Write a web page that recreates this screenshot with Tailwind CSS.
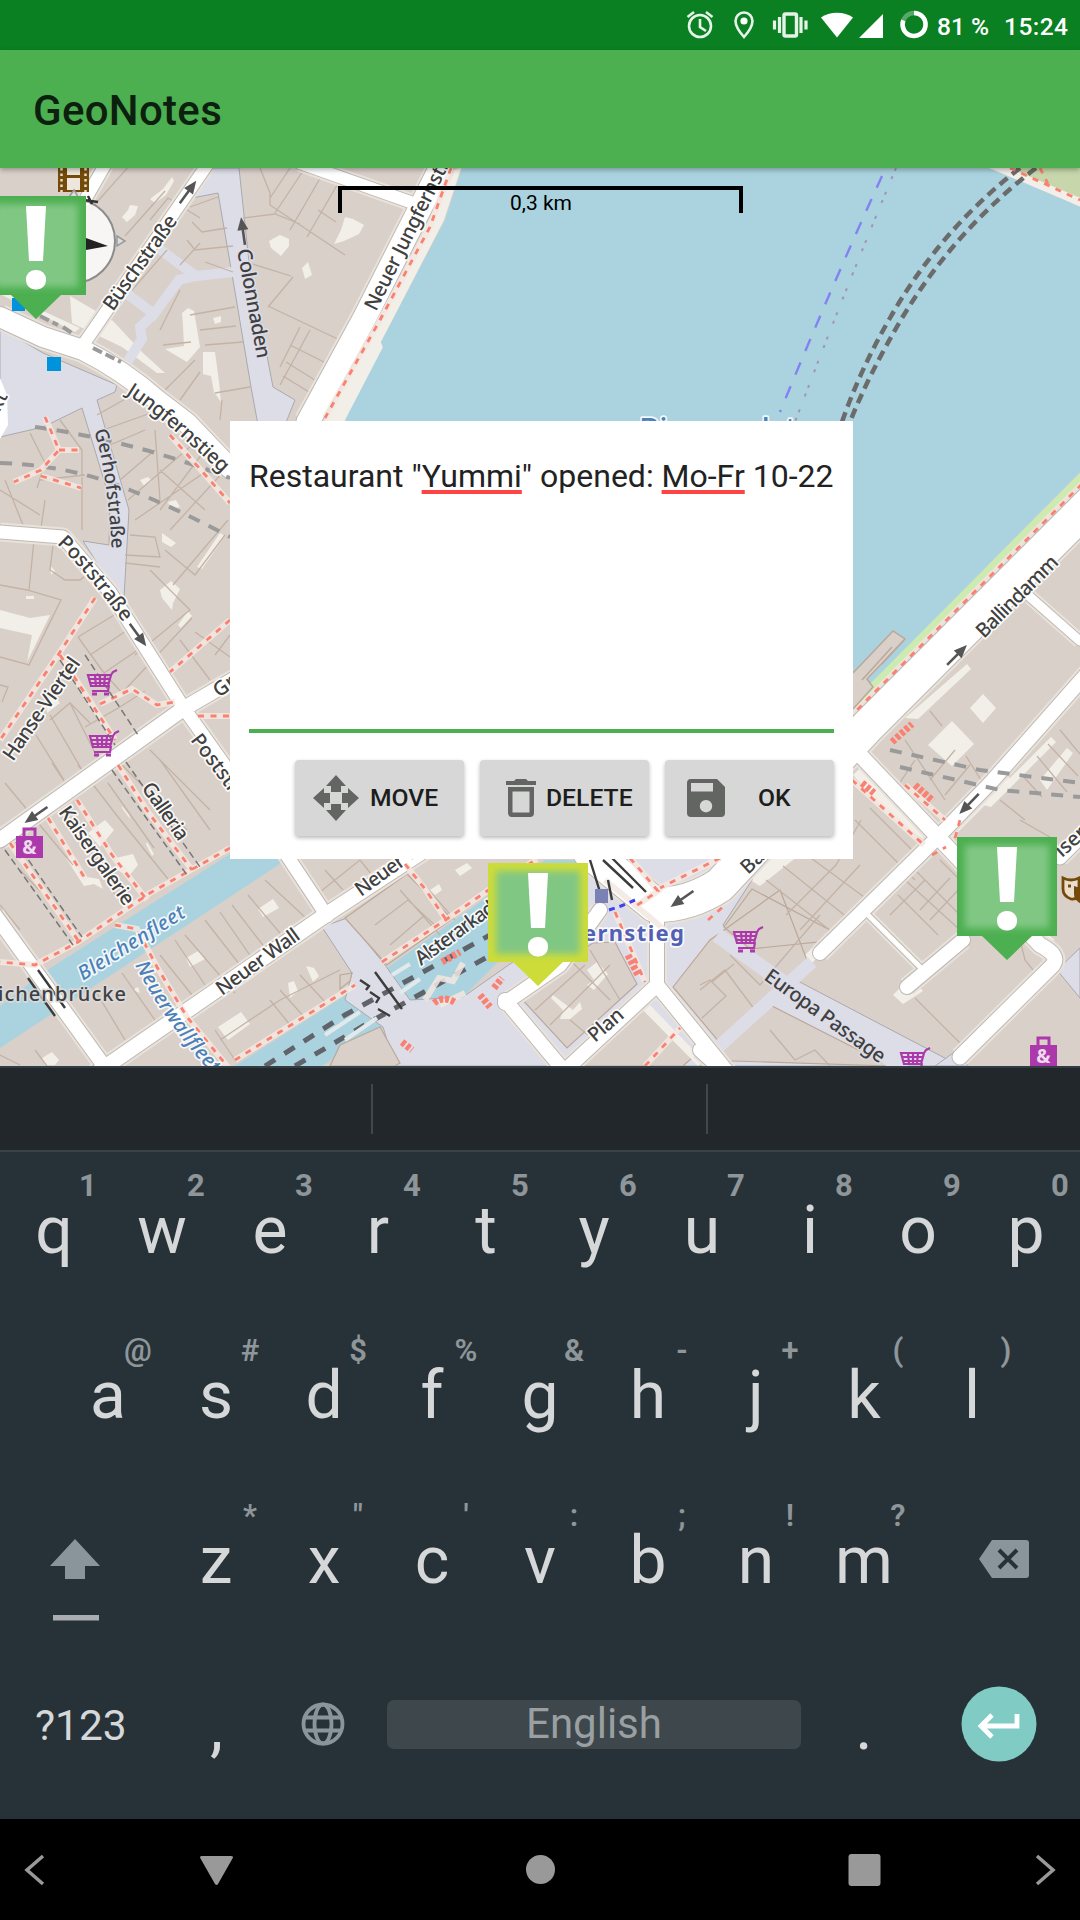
<!DOCTYPE html>
<html lang="en">
<head>
<meta charset="utf-8">
<title>GeoNotes</title>
<script src="https://cdn.jsdelivr.net/npm/@tailwindcss/browser@4"></script>
</head>
<body class="w-[1080px] h-[1920px] overflow-hidden flex flex-col bg-black font-['Roboto',sans-serif]">

<!-- status bar -->
<header class="h-[50px] shrink-0 bg-[#0a8022] relative z-10">
  <svg class="block w-[1080px] h-[50px]" viewBox="0 0 1080 50" fill="none" stroke="#fff">
    <g stroke-width="2.6" stroke="#e6f3e8"><circle cx="700" cy="26" r="11"/><path d="M700 19v8l6 4M687.500 17l6.500-5M712.500 17l-6.500-5" /></g>
    <path d="M744 12.500c-5 0-8.500 4-8.500 8.500 0 6.500 8.500 16 8.500 16s8.500-9.500 8.500-16c0-4.500-3.500-8.500-8.500-8.500z" stroke-width="2.600" stroke="#e6f3e8"/><circle cx="744" cy="21" r="3.600" fill="#fff" stroke="none"/>
    <g stroke="#e6f3e8"><rect x="784" y="14" width="12.500" height="22" rx="1.500" stroke-width="3.400"/><path stroke-width="3.200" d="M779.500 17v16M774.500 20.500v9M801 17v16M806 20.500v9"/></g>
    <path d="M837 37.500L821 17.500c8-6.500 24-6.500 32 0z" fill="#fff" stroke="none"/>
    <path d="M859 38L883 14v24z" fill="#fff" stroke="none"/>
    <circle cx="914" cy="24.500" r="11.500" stroke-width="4.500" stroke="#58a968"/>
    <path d="M914 13a11.500 11.500 0 1 1-10.700 7.400" stroke-width="4.500"/>
    <g fill="#fff" stroke="none" font-family="Roboto" font-weight="500" font-size="24.500">
      <text x="937" y="35" textLength="52">81 %</text><text x="1004" y="35" textLength="64">15:24</text>
    </g>
  </svg>
</header>

<!-- app bar -->
<div class="h-[118px] shrink-0 bg-[#4caf50] flex items-center pl-[33px] pt-[3px] relative z-10 shadow-[0_2px_5px_rgba(0,0,0,0.3)]">
  <h1 class="text-[42px] leading-none font-medium text-[#0d1f0e] tracking-[0.3px]">GeoNotes</h1>
</div>

<!-- map -->
<main class="relative h-[898px] shrink-0 overflow-hidden bg-[#d9d0c9]">
<svg id="map" class="absolute inset-0 w-[1080px] h-[898px]" viewBox="0 168 1080 898" fill="none">
  <defs>
    <g id="cart" stroke="#ac39ac" stroke-width="2.200" fill="none"><path d="M1 6h23l-3 11H4zM2 10h21M3 14h19M8 6l1 11M13 6v11M18 6l-1 11M24 6l2-3 4-2M22 16l-1 6H5" /><path d="M5 25h5M17 25h5" stroke-width="3"/></g>
    <g id="bag"><path d="M8 10V2h11v8" stroke="#ac39ac" stroke-width="3" fill="none"/><path d="M0 9h27v22H0z" fill="#ac39ac"/><text x="13.500" y="27" font-family="Noto Sans" font-size="19" font-weight="700" fill="#eddaec" text-anchor="middle">&amp;</text></g>
    <g id="arrow"><path d="M-14 0H4" stroke="#555" stroke-width="2.600"/><path d="M14 0L1-5.500V5.500z" fill="#555"/></g>
    <filter id="soft" x="-20%" y="-20%" width="140%" height="140%"><feGaussianBlur stdDeviation="3.500"/></filter>
    <g id="bang" fill="#fff"><path d="M-10 10H10L7 65H-7z"/><rect x="-10" y="74" width="20" height="19.500" rx="9"/></g>
  </defs>

  <!-- courtyards -->
  <g fill="#f2efe9">
    <path d="M172 177l-9 12-13 10 5 4 11-8 8-14zM138 206l-8-1-2 5-6 7 5 5 8-7zM289 239l-9-4-11 6 2 7 10 8 8-10zM182 313l6-5 6 3 6 36-13 15-22-13 19-3-1-20zM203 352h12l4 30 2 20-7-10-3-16-8-2zM302 268l6-6 4 13-7 4zM213 318l8-2v6l-6 2zM345 217l8 2 11 6-5 9-15 7-10 3 7-14zM168 502l8-2 4 7-9 2zM140 480l8-3 4 4-8 5zM197 567l23-34 5 3-23 33zM160 590l11-9 9 8-7 14-1 7-10-12zM178 625l10-14 4 5-11 12zM162 533l14 10-5 4-9-5zM0 610l30 8 20-3-23 47 5-27-32-7zM47 713l13-10-6-8-8 8zM26 596h8v3h-8zM50 565l5 6-4 4z"/>
    <path d="M88 833l17-13 9 10-14 17zM116 858l17-4 5 11-10 12-10-7zM66 858l8-2 7 20 18 3 4 10-9-5-10 2zM122 806l7 9 1 4-8-11zM147 842l7 12-2 2-6-12zM258 909l15-10 6 9-16 9zM186 958l12-7 7 8-15 8zM218 1027l23-15 9 12-22 16zM288 983l6-2 4 10-8 7zM306 966l8 2 5 8-6 6zM42 1058l10-6 7 8-4 5h-10zM133 990l5-3 2 6zM455 870l12-7 5 5-12 8zM430 890l9-6 3 6-7 5zM399 910l9-8 8 7-14 7zM370 923l9-5 6 9-9 5z"/>
    <path d="M970 708l13-14 13 14-13 15zM928 745l24-24 22 23-22 22zM905 718l62-54 4 5-53 50zM1040 780l27-32 6 5-26 37zM983 805l68-68 5 5-65 65z"/>
    <path d="M750 880l36-36 12 12-38 30zM803 957l100-98 6 6-99 100zM700 1040l62-44 4 4-60 55zM980 780l14-14 17 13-68 68-12-10zM893 995l18-18 12 14-20 13zM1035 925l20 15-20 6z"/>
    <path d="M853 775l20-20 40 45 20 30-6 12-40-28z"/>
    <path d="M70 296l43 25 30 32 22 20-8 0-35-26-50-24zM0 285l30 20 50 23-5 4-75-38zM325 385l95-200 16-10 25-7-17 52-63 122 2 6-37 73-32 9z"/>
  </g>

  <!-- water -->
  <g fill="#aad3df">
    <path d="M462 168L445 220 381 342 383 347 345 420 500 740 853 705 993 560 1080 472V207L997 168z"/>
    <path d="M0 1006L44 972 230 854H295L0 1048z"/>
    <path d="M235 1066L380 973 487 897 545 860H600L463 997 405 1005 383 1027 322 1066z"/>
  </g>
  <path d="M1080 168H1000l80 34z" fill="#c8d7ab"/>
  <path d="M990 164l92 39" stroke="#f4eee8" stroke-width="8"/>
  <path d="M1082 476L850 709" stroke="#cdebb0" stroke-width="7"/>
  <path d="M1082 484L850 717" stroke="#f1e3dc" stroke-width="6"/>
  <path d="M853 673l40-42 12 8-38 40 6 8-20 22" fill="#d9d0c9" stroke="#bba899" stroke-width="1.500"/>
  <path d="M862 680l30-33M882 664l22-24" stroke="#bba899" stroke-width="1.500"/>

  <!-- pedestrian areas -->
  <g fill="#dddde8" stroke="#aaa9ae" stroke-width="1">
    <path d="M213 168H239L249 262 273 387 295 400 285 425H258L251 387 233 280 218 193 192 198z"/>
    <path d="M0 328L43 353 117 385 115 392 97 400 129 510 127 545 124 598 113 588 83 541 109 545 110 500 82 408 43 427 0 437z"/>
    <path d="M322 927L347 918 385 965 410 1000 463 997 530 950 600 858H760L752 880 723 925 730 935 735 948 960 1066H395L383 1027 345 1000 352 973z"/>
    <path d="M1057 970l23-22v50zM935 1066l25-18 8 18z"/>
  </g>
  <path d="M0 378l7 17 1 30-8 14z" fill="#fff"/>
  <path d="M158 248l38 28 37-4M196 276l-17 4-25 34-28-21M154 314l-14 13 2 12-14 22" stroke="#dddde8" stroke-width="10"/>

  <!-- buildings on open ground -->
  <g fill="#d9d0c9" stroke="#bba899" stroke-width="1.200">
    <path d="M345 918l62-44 45 45-65 46zM520 997l40-34 33-20 22-1 22 42-70 64z"/>
    <path d="M580 1066l67-63 45 55-9 8zM673 987l37-47 70-50 30 78-90 75zM724 927l28-38 95 50-97 10zM700 1060l70-55 120 61zM340 1045l40-18 20 36-5 3H330zM340 975l12-2-2 8-10 8z"/>
  </g>
  <path d="M587 970l10-8 11 12-14 16-7-5 7-5zM553 995l20 15 7-8 2 7-12 10-10 0 3-9-12-12zM505 1003l8-5 46 58-6 10zM640 1007l8-4 55 57-5 6z" fill="#f2efe9"/>

  <!-- plot boundaries -->
  <g stroke="#c3b3a6" stroke-width="1.300">
    <path d="M90 210l55-62M125 236l40-45M150 220l18-22 32 20M190 207l28-10M192 222l10 10 25-4M187 240l8 10 38-4M205 262l28 10M180 265l20-22M260 168l10 25 0 12 75 50M290 168l-20 30M305 168l-30 45M322 175l-32 55M340 180l-33 57M318 210l18 12M243 218l32-4 25 10M246 262l45 14M268 306l76 36M293 277l-25 30M310 330l-30 55M290 345l40 20M286 362l32 20M283 376l26 16M300 327l-20 40M190 315l45-8M200 330l36-4M205 345l38-3M215 393l35-6M222 400l-2 20M163 345l28-3M165 390l30-30M180 400l20-28M132 290l35-40M160 330l20-40"/>
    <path d="M30 433l15 30-8 25M60 420l22 30v80M40 480l45-5M45 500l-5 35M5 480l20 50M0 490l40 25M97 415l30-17M103 430l48-17M110 445l35-15M120 480l35-30M128 500l70-60M135 520l95-65M155 430l5 70M160 470l45 40M205 450l-45 60M225 470l-55 60M228 520l-55 65M165 550l30 25 30-40M150 570l40 40-55 45M130 535l25 2 5 20-35-2M125 563l35 4M0 585l27 5 34 10-15 30M34 540l-5 50M53 545l-3 25 15 10 15 0 15-12M61 600l-32 65-29-8M78 637l46-28M78 637l26 36 18 20 70-75M90 655l48-32M104 673l44-30M85 727l35-20 25-16M0 685l8 2-6 15M50 720l20-17 20 20M50 715l32 55M70 703l30 60M36 735l28 45M180 640l30 40M195 632l35 25M215 655l15-20"/>
    <path d="M5 783l68 82M52 763l12 18M78 765l40 52 50 62M108 783l46 65M122 765l65 65M160 760l50 70M150 750l60 60M20 870l48 50M90 850l25 45M0 905l20 25M68 1007l32 54M95 990l30 50M122 973l35 50M160 955l40 50M175 940l40 60M185 935l50 58M205 920l45 58M220 912l38 55M232 905l40 52M248 895l42 50M265 880l43 40M325 870l18 20M310 900l50-40M0 1055l20 10M35 1050l12 16M220 1040l60-40 60-30M235 1060l-20-30M270 1000l20 25M280 990l25 28M300 975l28 30"/>
    <path d="M360 860l20 25M375 925l33-25 30 28M390 945l35-30M400 890l40 45M420 880l35 40M535 1010l50-45M550 1025l60-60M590 950l30 50M570 960l40 40M600 1045l-30-25M700 990l25-20 30 40M712 982l22-18"/>
    <path d="M766 880l70 55M783 866l70 56M800 850l75 55M786 915l50-50 25-45M800 930l60-65M730 955l30 30 60-70M855 820l60 60M870 808l50 50M905 880l55 50M915 870l50 50M898 895l40 40M940 860l25 25M930 920l30-32M920 910l30-32M890 915l35-35M915 998l45 45M1020 820l35 20M1000 800l25 20M1020 940l5 20 12 15-8 6M700 985l10-5 16 16-24 22M770 1030l25 30M795 1060l20-10 15 16M930 711l12 15M966 756l20 32M905 740l40 60M915 760l-20 30M1060 730l25 30M1048 744l30 32M1037 756l30 36M1022 775l20 22M930 780l25-30M945 795l25-30"/>
  </g>

  <g id="roads"></g>

  <!-- railway in tunnel, ferry line -->
  <g stroke="#6b6b6b" stroke-width="4.500" stroke-dasharray="10 6">
    <path d="M1020 168Q940 230 890 318 860 370 842 422"/>
    <path d="M1036 168Q955 230 902 318 868 376 850 422"/>
  </g>
  <path d="M882 176Q830 290 780 412" stroke="#8282f2" stroke-width="2.400" stroke-dasharray="13 12.500"/>
  <path d="M896 168Q845 290 795 422" stroke="#a294b3" stroke-width="2" stroke-dasharray="3 6 3 14"/>
  <g stroke="#9a9a9a" stroke-width="4" stroke-dasharray="12 10">
    <path d="M35 427Q130 440 230 478M0 463Q70 465 130 490 180 510 230 537"/>
    <path d="M890 750L980 770 1080 783M900 767L1000 790 1080 797"/>
  </g>
  <g stroke="#60646a" stroke-width="5" stroke-dasharray="12 11">
    <path d="M265 1066L345 1015 490 935M295 1066L370 1022 500 950"/>
  </g>
  <path d="M325 1035l35-23M345 1040l32-22M392 975l18-11M400 993l20-14" stroke="#e2e9ea" stroke-width="4"/>

  <!-- footpaths -->
  <g stroke="#f3e7e1" stroke-opacity="0.850" stroke-width="6">
    <path d="M451 168L430 227 380 320 325 418M95 598L58 655 0 740M60 655L115 740M118 765L148 812 192 870M230 848L150 893 78 942 35 965 0 962M77 800l35 55 35 45M48 818l38 62M10 843l35 50 35 50M115 925l22 4 20 38 30 50 45 55M235 1060L355 985M382 962l65-43 40-28 50-32M405 864l20 25 22 32M230 620l-60 52M100 704l32-15 25 16 18-3M198 716h32M170 435l60 68M45 417l14 33-18 20-27 12M59 450h20M41 476l40 12"/>
    <path d="M852 780l72 65M905 785l40 35M630 858l28 33-22 15M720 858l-60 30M615 912l30 70M605 880l60 50M645 1066l35-38M425 1000l14-22 14 3 10-18M440 1005l25-12"/>
  </g>
  <g stroke="#fa8072" stroke-width="2.800" stroke-dasharray="6 6.500">
    <path d="M1082 484L850 717M451 168L430 227 380 320 325 418M95 598L58 655 0 740M60 655L115 740M118 765L148 812 192 870M230 848L150 893 78 942 35 965 0 962M77 800l35 55 35 45M48 818l38 62M10 843l35 50 35 50M115 925l22 4 20 38 30 50 45 55M235 1060L355 985M382 962l65-43 40-28 50-32M405 864l20 25 22 32M230 620l-60 52M100 704l32-15 25 16 18-3M198 716h32M170 435l60 68M45 417l14 33-18 20-27 12M59 450h20M41 476l40 12"/>
    <path d="M852 780l72 65M905 785l40 35M630 858l28 33-22 15M720 858l-60 30M615 912l30 70M645 1066l35-38M1010 168l70 32M1040 168l8 16M708 920l16-14M932 855l14-8M955 838l5-18"/>
  </g>
  <g stroke="#fa8072" stroke-width="7" stroke-dasharray="4 2">
    <path d="M442 962l18-10M434 1003q10-8 22 0M480 995l10 12M494 988l8-10M402 1042l10 8M862 783l12 10M915 785l18 16M892 742l20-18M628 955l10 20"/>
  </g>
  <g stroke="#777" stroke-width="1.500" stroke-dasharray="7 4">
    <path d="M85 655l53 80M60 660l55 85M112 770l75 105M126 762l74 105M5 850l68 95M16 842l66 95"/>
  </g>
  <path d="M40 316l18 9M63 327l9 6M93 348l28 14" stroke="#9a9a9a" stroke-width="4" stroke-dasharray="10 4"/>
  <g stroke="#3c3c3c" stroke-width="2.400">
    <path d="M28 978l27 38M38 970l27 38M375 972l27 37M590 860l10 32M608 880l4 20M603 860l30 28M612 858l34 34M360 980l9 6-3 4M370 992l9 6-3 5M378 1009l12 7"/>
  </g>
  <path d="M609 910l12-4 14-6" stroke="#4040ee" stroke-width="3" stroke-dasharray="6 5"/>

  <!-- labels -->
  <defs>
    <path id="pJung" d="M126 394Q160 415 231 482"/>
    <path id="pGer" d="M94 431Q108 470 113 570"/>
    <path id="pPost" d="M57 544Q85 570 126 626"/>
    <path id="pNeuf" d="M135 965Q165 1025 222 1085"/>
  </defs>
  <g font-family="'Noto Sans','Open Sans',sans-serif" font-size="20" font-weight="500" fill="#404040" stroke="#fff" stroke-opacity="0.850" stroke-width="3.500" stroke-linejoin="round" paint-order="stroke">
    <text transform="translate(113 312) rotate(-54.500)" textLength="112">Büschstraße</text>
    <text transform="translate(237 250) rotate(79.500)" stroke="#dddde8" textLength="111">Colonnaden</text>
    <text transform="translate(376 312) rotate(-63.500)" textLength="186">Neuer Jungfernstieg</text>
    <text textLength="125"><textPath href="#pJung">Jungfernstieg</textPath></text>
    <text stroke="#dddde8" font-size="18.700"><textPath href="#pGer">Gerhofstraße</textPath></text>
    <text><textPath href="#pPost">Poststraße</textPath></text>
    <text transform="translate(190 740) rotate(53)">Poststraße</text>
    <text transform="translate(13 762) rotate(-55.500)" textLength="120">Hanse-Viertel</text>
    <text transform="translate(219 698) rotate(-36)">Große Bleichen</text>
    <text transform="translate(141 788) rotate(55)" textLength="66">Galleria</text>
    <text transform="translate(58 812) rotate(55)" textLength="116">Kaisergalerie</text>
    <text transform="translate(222 996) rotate(-36)" textLength="98">Neuer Wall</text>
    <text transform="translate(361 897) rotate(-36)" textLength="98">Neuer Wall</text>
    <text transform="translate(421 966) rotate(-36)" textLength="115">Alsterarkaden</text>
    <text transform="translate(595 1043) rotate(-41)" textLength="40">Plan</text>
    <text transform="translate(748 875) rotate(-43)">Ballindamm</text>
    <text transform="translate(984 639) rotate(-45)" textLength="107">Ballindamm</text>
    <text transform="translate(1062 858) rotate(-42)">iserstraße</text>
    <text transform="translate(763 979) rotate(36)" stroke="#dddde8" textLength="144">Europa Passage</text>
    <text x="-2" y="1001" stroke="#dcdcdc" textLength="128">ichenbrücke</text>
    <text transform="translate(8 396) rotate(-62)" text-anchor="end">Markt</text>
    <g font-style="italic" fill="#4c80b8">
      <text transform="translate(83 981) rotate(-32)" textLength="122">Bleichenfleet</text>
      <text textLength="134"><textPath href="#pNeuf">Neuerwallfleet</textPath></text>
    </g>
    <text x="639" y="440" font-size="31" fill="#4c80b8">Binnenalster</text>
    <text x="583" y="941" font-size="22" font-weight="700" fill="#5160b5" textLength="101">ernstieg</text>
  </g>
  <use href="#arrow" transform="translate(188 192) rotate(-54)"/>
  <use href="#arrow" transform="translate(243 231) rotate(-98)"/>
  <use href="#arrow" transform="translate(138 635) rotate(54)"/>
  <use href="#arrow" transform="translate(36 815) rotate(145)"/>
  <use href="#arrow" transform="translate(957 655) rotate(-45)"/>
  <use href="#arrow" transform="translate(969 804) rotate(134)"/>
  <use href="#arrow" transform="translate(682 899) rotate(145)"/>

  <!-- points of interest -->
  <path d="M47 357h14v14H47zM12 298h13v13H12z" fill="#0092da"/>
  <rect x="595" y="889" width="13" height="14" fill="#7a82b5"/>
  <path d="M58 160h31v32H58z" fill="#734a08"/><path d="M67 160h13v15H67zM67 178h13v12H67z" fill="#eee6dc"/><path d="M61.500 168v24M85.500 168v24" stroke="#e8dccb" stroke-width="2.500" stroke-dasharray="2.500 3"/>
  <use href="#cart" x="87" y="669"/><use href="#cart" x="89" y="730"/><use href="#cart" x="733" y="926"/><use href="#cart" x="900" y="1047"/>
  <use href="#bag" x="16" y="827"/><use href="#bag" x="1030" y="1036"/>
  <path d="M1063 878q8 4 16 0v18q-4 4-8 3-8-3-8-10z" stroke="#734a08" stroke-width="2.800" fill="#eadfce"/><path d="M1074 886q6 3 12-2v22q-12-4-12-12z" fill="#734a08"/><path d="M1068 886h3" stroke="#734a08" stroke-width="3"/>

  <!-- compass -->
  <circle cx="73" cy="241" r="42" fill="#fff" fill-opacity="0.800" stroke="#8c8c8c" stroke-width="2"/>
  <path d="M86 238L108 246 86 250z" fill="#222"/><path d="M117 236l8 5-8 5zM69 197l5-7 4 7z" fill="#ddd" stroke="#999" stroke-width="1.500"/>
  <path d="M84 200l14 2M88 196l4 8" stroke="#333" stroke-width="2.500"/>

  <!-- note markers -->
  <g transform="translate(36 196)"><path d="M-50 0H50V99H25L0 123-25 99H-50z" fill="#4caf50"/><rect x="-42" y="8" width="84" height="83" fill="#81c784" filter="url(#soft)"/><use href="#bang"/></g>
  <g transform="translate(538 863)"><path d="M-50 0H50V99H25L0 123-25 99H-50z" fill="#cddc39"/><rect x="-42" y="8" width="84" height="83" fill="#81c784" filter="url(#soft)"/><use href="#bang"/></g>
  <g transform="translate(1007 837)"><path d="M-50 0H50V99H25L0 123-25 99H-50z" fill="#4caf50"/><rect x="-42" y="8" width="84" height="83" fill="#81c784" filter="url(#soft)"/><use href="#bang"/></g>

  <!-- scale bar -->
  <path d="M340 213V188H741V213" stroke="#000" stroke-width="4"/>
  <text x="541" y="210" text-anchor="middle" font-family="Roboto" font-size="21" fill="#000" textLength="62">0,3 km</text>
</svg>

<!-- note editor -->
<section class="absolute left-[230px] top-[253px] w-[623px] h-[438px] bg-white flex flex-col px-[19px]">
  <div class="h-[312px] border-b-4 border-[#4caf50] pt-[36px]">
    <p class="text-[32px] leading-[38px] text-[#222] whitespace-nowrap">Restaurant "<span class="underline decoration-[#ff4444] decoration-[4px] underline-offset-[3px] [text-decoration-skip-ink:none]">Yummi</span>" opened: <span class="underline decoration-[#ff4444] decoration-[4px] underline-offset-[3px] [text-decoration-skip-ink:none]">Mo-Fr</span> 10-22</p>
  </div>
  <div class="flex justify-end gap-4 pt-[27px]">
    <button class="w-[169px] h-[76px] rounded-[4px] bg-[#d6d7d6] shadow-[0_2px_4px_rgba(0,0,0,0.28)] flex items-center pl-[18px] gap-[11px] text-[24.7px] leading-none font-medium text-[#1d1d1d]">
      <svg class="w-[46px] h-[46px]" viewBox="0 0 46 46" fill="#636563"><path d="M23 0l10 11h-5v6H18v-6h-5zM23 46L13 35h5v-6h10v6h5zM0 23l11-10v5h6v10h-6v5zM46 23L35 33v-5h-6V18h6v-5z"/></svg><span class="pt-[1px]">MOVE</span></button>
    <button class="w-[169px] h-[76px] rounded-[4px] bg-[#d6d7d6] shadow-[0_2px_4px_rgba(0,0,0,0.28)] flex items-center pl-[26px] gap-[10px] text-[24.7px] leading-none font-medium text-[#1d1d1d]">
      <svg class="w-[30px] h-[38px] shrink-0" viewBox="0 0 30 38" fill="#636563"><path d="M8 2l2-2h10l2 2h8v4H0V2zM2 8h26v26q0 4-4 4H6q-4 0-4-4zM6.500 12.500V33.500H23.500V12.500z" fill-rule="evenodd"/></svg><span class="pt-[1px]">DELETE</span></button>
    <button class="w-[169px] h-[76px] rounded-[4px] bg-[#d6d7d6] shadow-[0_2px_4px_rgba(0,0,0,0.28)] flex items-center pl-[22px] gap-[33px] text-[24.7px] leading-none font-medium text-[#1d1d1d]">
      <svg class="w-[38px] h-[38px]" viewBox="0 0 38 38" fill="#636563"><path d="M4 0H30L38 8V34q0 4-4 4H4q-4 0-4-4V4q0-4 4-4zM4 4V12.500H26V4zM19 21a6.200 6.200 0 1 0 .01 0z" fill-rule="evenodd"/></svg><span class="pt-[1px]">OK</span></button>
  </div>
</section>
</main>

<!-- keyboard -->
<div class="h-[86px] shrink-0 bg-[#22272b] border-t-2 border-t-[#313d42] border-b-2 border-b-[#39434a] flex items-center">
  <div class="w-[373px] h-[50px] border-r-2 border-[#41474b]"></div>
  <div class="w-[335px] h-[50px] border-r-2 border-[#41474b]"></div>
</div>
<div class="h-[667px] shrink-0 bg-[#273238] flex flex-col text-[#d5d7d8]">
  <div id="row1" class="h-[165px] flex"></div>
  <div id="row2" class="h-[165px] flex pl-[54px]"></div>
  <div class="h-[165px] flex">
    <div class="w-[162px] pt-[57px] pl-[50px]">
      <svg class="w-[50px] h-[83px]" viewBox="0 0 50 83"><path d="M25 0L50 27H35V40H15V27H0z" fill="#8a959b"/><path d="M3 76H49V81.500H3z" fill="#a9acb0"/></svg>
    </div>
    <div id="row3" class="flex w-[756px]"></div>
    <div class="pt-[58px] pl-[61px]">
      <svg class="w-[50px] h-[38px]" viewBox="0 0 50 38"><path d="M13 0H47q3 0 3 3V35q0 3-3 3H13L0 19z" fill="#8a959b"/><path d="M20 10L38 28M38 10L20 28" stroke="#273238" stroke-width="4"/></svg>
    </div>
  </div>
  <div class="flex h-[165px] items-start">
    <div class="w-[162px] pl-[35px] pt-[58px] text-[42.5px] leading-[42px]">?123</div>
    <div class="w-[108px] pt-[47px] pl-[1px] text-center text-[66px] leading-[66px]">,</div>
    <svg class="w-[44px] h-[44px] mt-[55px] ml-[31px]" viewBox="0 0 44 44" fill="none" stroke="#8a959b" stroke-width="3.800"><circle cx="22" cy="22" r="19.500"/><ellipse cx="22" cy="22" rx="8.500" ry="19.500"/><path d="M4 15.500H40M4 28.500H40"/></svg>
    <div class="w-[414px] h-[49px] mt-[53px] ml-[42px] rounded-[7px] bg-[#3d474c] text-center text-[42px] leading-[48px] text-[#9a9fa2]">English</div>
    <div class="w-[108px] pt-[47px] ml-[9px] text-center text-[66px] leading-[66px]">.</div>
    <svg class="w-[76px] h-[76px] mt-[39px] ml-[43px]" viewBox="0 0 76 76"><circle cx="38" cy="38" r="37.500" fill="#80cbc4"/><path d="M56 28V40H20M31 29L20 40 31 51" fill="none" stroke="#fff" stroke-width="4.800"/></svg>
  </div>
</div>

<!-- navigation bar -->
<nav class="h-[101px] shrink-0 bg-black">
  <svg class="block w-[1080px] h-[101px]" viewBox="0 0 1080 101" fill="#999">
    <path d="M43 37L27 51 43 65M1037 37L1053 51 1037 65" fill="none" stroke="#999" stroke-width="3.500"/>
    <path d="M202 37H231q3 0 1.500 2.500L218 65q-1.500 2-3 0L200.500 39.500Q199 37 202 37z"/>
    <circle cx="540.500" cy="50.500" r="14.500"/><rect x="848.500" y="35" width="32" height="32" rx="3"/>
  </svg>
</nav>

<script>
const key = (letter, hint, weight, shift) => `<div class="relative w-[108px] pt-[46px] text-center text-[66px] leading-[66px]">${letter}<span class="absolute ${shift} top-[18px] w-[100px] text-center text-[31px] leading-[31px] ${weight} text-[#8e969a]">${hint}</span></div>`;
const fill = (id, letters, hints, weight) => {
  document.getElementById(id).innerHTML = [...letters].map((l, i) => key(l, hints[i], weight, hints[i] === '@' ? 'left-[34px]' : 'left-[38px]')).join('');
};
fill('row1', 'qwertyuiop', '1234567890', 'font-bold');
fill('row2', 'asdfghjkl', ['@', '#', '$', '%', '&amp;', '-', '+', '(', ')'], 'font-semibold');
fill('row3', 'zxcvbnm', '*"\':;!?', 'font-semibold');

// street centre lines with their widths
const roads = [
  ['M0 317L43 337 83 350Q123 370 157 400L187 423 230 468', 20],
  ['M83 345L207 165', 12],
  ['M442 165L365 317 308 422', 23],
  ['M300 163L413 203', 12],
  ['M85 200L105 165', 12],
  ['M0 532L63 537 110 592 183 707 260 815 327 916', 13],
  ['M250 670L183 709 0 840', 15],
  ['M-5 915L107 1070', 14],
  ['M95 1074L327 914 425 850', 15],
  ['M1090 504L868 726 720 885Q690 905 655 905L590 852', 34],
  ['M657 905V985L560 1075M657 985L730 1075M505 1000L560 1066M505 1003L560 965 600 910', 14],
  ['M1090 670L993 780 938 837 820 953', 14],
  ['M860 755L938 837 1040 945Q1060 955 1053 965L960 1057', 15],
  ['M963 940L907 987', 14],
  ['M1030 597L1080 641', 9],
  ['M1090 828L1060 858', 13],
  ['M867 914L921 968', 5],
  ['M700 1050L722 1070', 14]
];
const peds = [['M717 935L905 1070', 15], ['M812 962L715 1050', 13], ['M340 925L372 970', 15]];
const line = (list, extra, color, cap) => list.map(([d, w]) => `<path d="${d}" stroke="${color}" stroke-width="${w + extra}" stroke-linecap="${cap}" stroke-linejoin="round"/>`).join('');
document.getElementById('roads').innerHTML =
  line(peds, 0, '#dddde8', 'butt') + line(roads, 6, '#e9e2da', 'butt') + line(roads, 2, '#bdb9b5', 'round') + line(roads, 0, '#ffffff', 'round');
</script>
</body>
</html>
